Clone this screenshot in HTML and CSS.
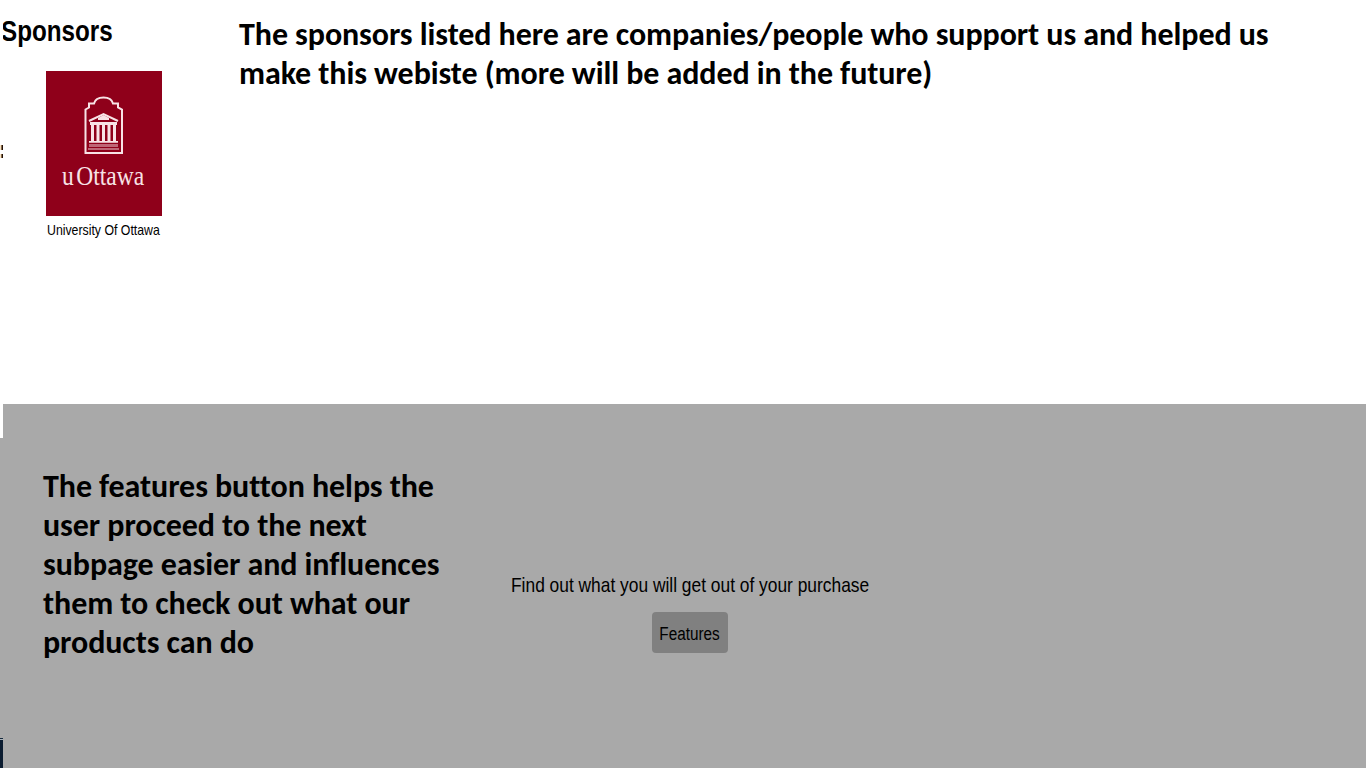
FILE: index.html
```
<!DOCTYPE html>
<html lang="en">
<head>
<meta charset="utf-8">
<title>Sponsors</title>
<link rel="stylesheet" href="styles.css">
</head>
<body>
<aside class="edge"><div class="edge-top"><i class="mark"></i><i class="mark mark-low"></i></div><div class="edge-mid"></div><div class="edge-foot"></div></aside>
<main class="page">
  <section class="sponsors">
    <div class="sponsor-column">
      <h1 class="title"><span>Sponsors</span></h1>
      <figure class="sponsor">
        <svg class="logo" viewBox="0 0 116 145" role="img" aria-label="uOttawa">
          <rect width="116" height="145" fill="#8f001a"/>
          <g fill="none" stroke="#f8e3e6" stroke-width="2">
            <path d="M39.5 82V38.5L43 36.5V32.5H48C49 28.5 53 26.5 57.5 26.5S66 28.5 67 32.5H72V36.5L76 38.5V82Z"/>
            <path d="M43 50L57.5 43L72 50"/>
          </g>
          <g fill="#f8e3e6">
            <path d="M52 47L57.5 44L63 47V49H52ZM44 51H71V54H44ZM45 54H48V71H45ZM50.5 54H53.5V71H50.5ZM56 54H59V71H56ZM61.5 54H64.5V71H61.5ZM67 54H70V71H67ZM43 70H72V71.7H43Z"/>
            <path d="M43 73H72V76H43ZM42 77H73V79H42Z" opacity=".45"/>
          </g>
          <text class="logo-text" transform="translate(16 114) scale(.87 1)"><tspan>u</tspan><tspan dx="3">Ottawa</tspan></text>
        </svg>
        <figcaption class="caption"><span>University Of Ottawa</span></figcaption>
      </figure>
    </div>
    <p class="note note-sponsors"><span>The sponsors listed here are companies/people who support us and helped us</span><span>make this webiste (more will be added in the future)</span></p>
  </section>
  <section class="features">
    <p class="note note-features"><span>The features button helps the</span><span>user proceed to the next</span><span>subpage easier and influences</span><span>them to check out what our</span><span>products can do</span></p>
    <div class="promo">
      <p class="lead"><span>Find out what you will get out of your purchase</span></p>
      <button class="button"><span>Features</span></button>
    </div>
  </section>
</main>
</body>
</html>
```
FILE: styles.css
```
* { box-sizing: border-box; }
body { margin: 0; width: 1366px; height: 768px; display: flex; overflow: hidden; background: #fff; color: #000; font-family: "Liberation Sans", Arial, sans-serif; }
p, h1, figure { margin: 0; }
.edge { width: 3px; flex: none; display: flex; flex-direction: column; }
.edge-top { height: 438px; padding-top: 145px; }
.mark { display: block; width: 3px; height: 5px; margin-bottom: 4px; background: linear-gradient(90deg, #fff, #f0c890 1px, #201008 2px); }
.mark-low { height: 4px; }
.edge-mid { height: 300px; background: #a9a9a9; }
.edge-foot { height: 30px; background: linear-gradient(#14283c 0 1px, #a9b2ba 1px 2px, #0b1c30 2px); }
.page { width: 1363px; flex: none; }
.sponsors { height: 404px; display: flex; }
.sponsor-column { width: 236px; flex: none; }
.title { height: 71px; padding-top: 14px; overflow: hidden; font-size: 29px; line-height: 34px; white-space: nowrap; }
.title span { display: inline-block; margin-left: -2px; transform: scaleX(.835); transform-origin: left; }
.sponsor { width: 116px; margin-left: 43px; }
.logo { display: block; width: 116px; height: 145px; }
.logo-text { font: 27px "Liberation Serif", serif; fill: #f8e3e6; }
.caption { padding: 4px 0 0 1px; font-size: 15px; line-height: 19px; white-space: nowrap; }
.caption span { display: inline-block; transform: scaleX(.82); transform-origin: left; }
.note { font: 700 32px/39px Carlito, Calibri, Lato, sans-serif; font-variant-ligatures: none; letter-spacing: -.07px; white-space: nowrap; }
.note span { display: block; width: max-content; }
.note-sponsors { padding-top: 15px; }
.features { height: 364px; background: #a9a9a9; display: flex; }
.note-features { width: 508px; padding: 63px 0 0 40px; }
.promo { width: 358px; padding-top: 168px; display: flex; flex-direction: column; align-items: center; }
.lead { width: 358px; font-size: 21px; line-height: 26px; white-space: nowrap; }
.lead span { display: inline-block; transform: scaleX(.827); transform-origin: left; }
.button { width: 76px; height: 41px; margin-top: 14px; padding: 3px 0 0; border: 0; border-radius: 4px; background: #808080; color: #000; font: 18px "Liberation Sans", Arial, sans-serif; display: flex; align-items: center; justify-content: center; }
.button span { transform: scaleX(.85); }
```
